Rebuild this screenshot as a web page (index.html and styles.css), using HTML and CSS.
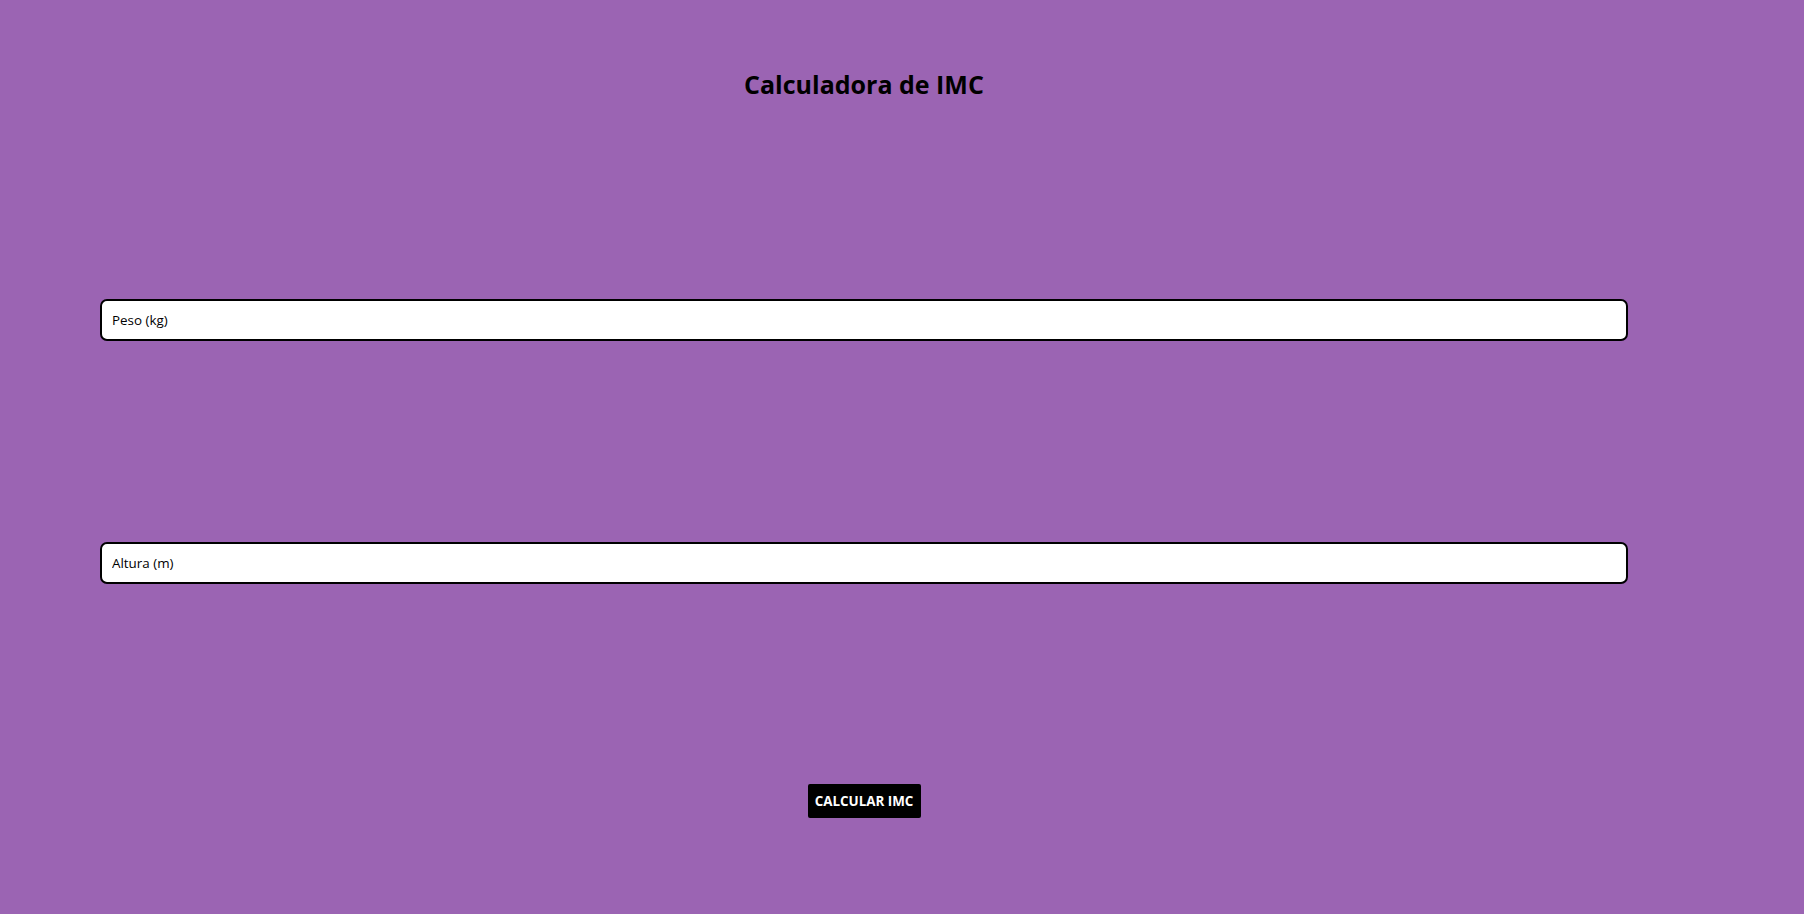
FILE: index.html
```html
<!DOCTYPE html>
<html lang="pt-BR">
<head>
<meta charset="utf-8">
<title>Calculadora de IMC</title>
<link rel="stylesheet" href="styles.css">
</head>
<body>
<main class="calc">
  <h1 class="calc-title">Calculadora de IMC</h1>
  <div class="field field-peso">
    <input class="calc-input" type="text" placeholder="Peso (kg)">
  </div>
  <div class="field field-altura">
    <input class="calc-input" type="text" placeholder="Altura (m)">
  </div>
  <div class="actions">
    <button class="calc-btn" type="button">CALCULAR IMC</button>
  </div>
</main>
</body>
</html>
```
FILE: styles.css
```css
html, body {
  margin: 0;
  padding: 0;
}
body {
  background: #9b64b3;
  font-family: "Open Sans", "Noto Sans", sans-serif;
  min-height: 900px;
}
.calc {
  width: 1528px;
  margin-left: 100px;
  display: flex;
  flex-direction: column;
}
.calc-title {
  margin: 68px 0 0;
  text-align: center;
  font-size: 25px;
  line-height: 32px;
  font-weight: 700;
  color: #000;
}
.field {
  display: flex;
}
.field-peso {
  margin-top: 199px;
}
.field-altura {
  margin-top: 201px;
}
.calc-input {
  box-sizing: border-box;
  width: 100%;
  height: 42px;
  border: 2px solid #000;
  border-radius: 7px;
  background: #fff;
  padding: 0 10px;
  font-family: "Open Sans", "Noto Sans", sans-serif;
  font-size: 13.4px;
  color: #000;
  outline: none;
}
.calc-input::placeholder {
  color: #000;
  opacity: 1;
}
.actions {
  display: flex;
  justify-content: center;
  margin-top: 200px;
}
.calc-btn {
  box-sizing: border-box;
  width: 113px;
  height: 34px;
  border: none;
  border-radius: 2px;
  background: #000;
  color: #fff;
  font-family: "Open Sans", "Noto Sans", sans-serif;
  font-size: 13.4px;
  font-weight: 700;
  padding: 0;
  cursor: pointer;
}
```
